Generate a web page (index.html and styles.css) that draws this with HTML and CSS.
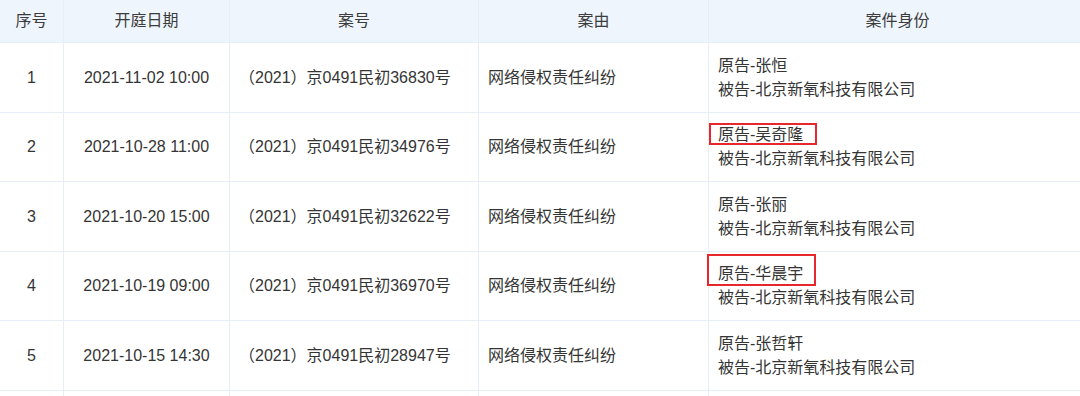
FILE: index.html
```html
<!DOCTYPE html>
<html lang="zh-CN">
<head>
<meta charset="utf-8">
<title>开庭公告</title>
<link rel="stylesheet" href="styles.css">
</head>
<body>
<div class="table">
  <div class="cell head">序号</div>
  <div class="cell head">开庭日期</div>
  <div class="cell head">案号</div>
  <div class="cell head">案由</div>
  <div class="cell head">案件身份</div>

  <div class="cell c r-odd">1</div>
  <div class="cell c r-odd">2021-11-02 10:00</div>
  <div class="cell l r-odd">（2021）京0491民初36830号</div>
  <div class="cell l r-odd">网络侵权责任纠纷</div>
  <div class="cell l multi r-odd"><span>原告-张恒</span><span>被告-北京新氧科技有限公司</span></div>

  <div class="cell c r-even">2</div>
  <div class="cell c r-even">2021-10-28 11:00</div>
  <div class="cell l r-even">（2021）京0491民初34976号</div>
  <div class="cell l r-even">网络侵权责任纠纷</div>
  <div class="cell l multi r-even"><span>原告-吴奇隆</span><span>被告-北京新氧科技有限公司</span><div class="mark mark-a"></div></div>

  <div class="cell c r-odd">3</div>
  <div class="cell c r-odd">2021-10-20 15:00</div>
  <div class="cell l r-odd">（2021）京0491民初32622号</div>
  <div class="cell l r-odd">网络侵权责任纠纷</div>
  <div class="cell l multi r-odd"><span>原告-张丽</span><span>被告-北京新氧科技有限公司</span></div>

  <div class="cell c r-even">4</div>
  <div class="cell c r-even">2021-10-19 09:00</div>
  <div class="cell l r-even">（2021）京0491民初36970号</div>
  <div class="cell l r-even">网络侵权责任纠纷</div>
  <div class="cell l multi r-even"><span>原告-华晨宇</span><span>被告-北京新氧科技有限公司</span><div class="mark mark-b"></div></div>

  <div class="cell c r-odd">5</div>
  <div class="cell c r-odd">2021-10-15 14:30</div>
  <div class="cell l r-odd">（2021）京0491民初28947号</div>
  <div class="cell l r-odd">网络侵权责任纠纷</div>
  <div class="cell l multi r-odd"><span>原告-张哲轩</span><span>被告-北京新氧科技有限公司</span></div>

  <div class="cell r-tail"></div>
  <div class="cell r-tail"></div>
  <div class="cell r-tail"></div>
  <div class="cell r-tail"></div>
  <div class="cell r-tail"></div>
</div>
</body>
</html>
```

FILE: styles.css
```css
html, body {
  margin: 0;
  padding: 0;
  background: #ffffff;
  overflow: hidden;
}

body {
  width: 1080px;
  height: 396px;
  font-family: "Liberation Sans", "Noto Sans CJK SC", sans-serif;
  font-size: 16px;
  color: #353535;
}

.table {
  width: 1080px;
  display: grid;
  grid-template-columns: 63px 165px 248px 229px 1fr;
  gap: 1px;
  background: #e6eef8;
}

.cell {
  background: #ffffff;
  display: flex;
  align-items: center;
  position: relative;
  line-height: 24px;
  white-space: nowrap;
}

.head {
  height: 42px;
  background: #eef5fd;
  justify-content: center;
  color: #3c3c3c;
}

.head:last-child,
.head:nth-child(5) {
  padding-left: 6px;
}

.r-odd {
  height: 69px;
}

.r-even {
  height: 68px;
}

.r-tail {
  height: 5px;
}

.c {
  justify-content: center;
}

.l {
  padding-left: 9px;
}

.multi {
  flex-direction: column;
  align-items: flex-start;
  justify-content: center;
}

.mark {
  position: absolute;
  border: 2px solid #e8262e;
  box-sizing: border-box;
}

.mark-a {
  left: 0;
  top: 10px;
  width: 108px;
  height: 22px;
}

.mark-b {
  left: -2px;
  top: 2px;
  width: 109px;
  height: 32px;
}
```
